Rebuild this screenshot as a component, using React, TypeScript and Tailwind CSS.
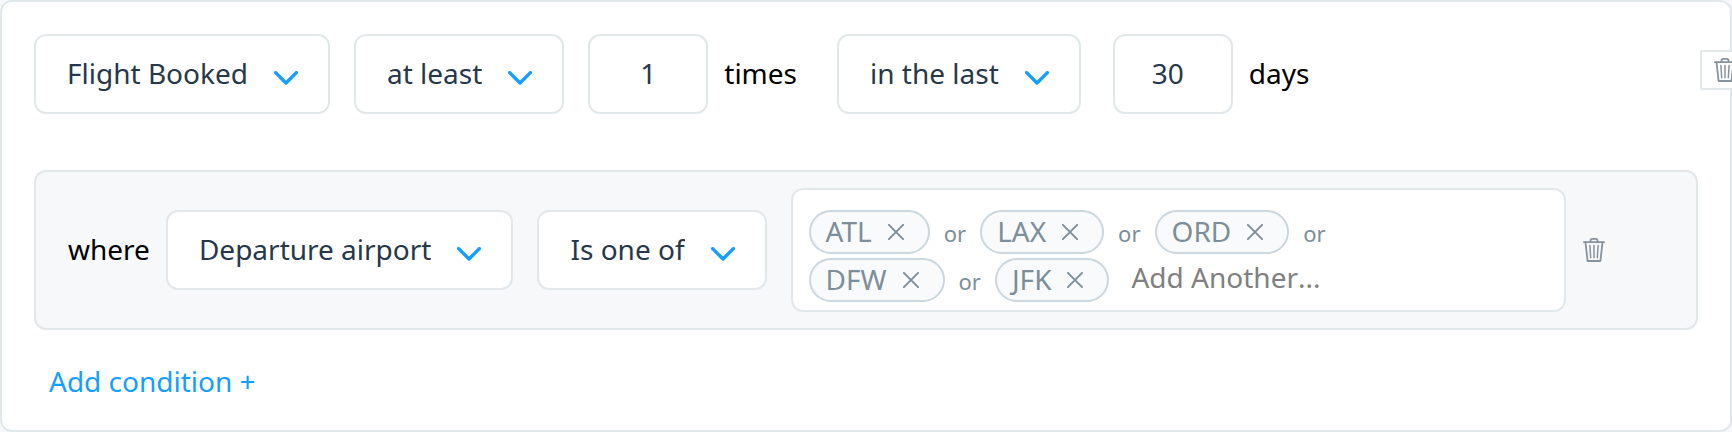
import { useState } from 'react';

interface DropdownProps {
  label: string;
  options: string[];
}

const Dropdown = ({ label, options }: DropdownProps) => (
  <div className="grid shrink-0 items-center">
    <select
      aria-label={label}
      className="col-start-1 row-start-1 h-20 field-sizing-content appearance-none rounded-xl border-2 border-[#e2e8ea] bg-white pb-0.5 pl-[31px] pr-20 text-[#26384a] outline-none"
    >
      {options.map((option) => (
        <option key={option}>{option}</option>
      ))}
    </select>
    <svg
      viewBox="0 0 24 14"
      className="pointer-events-none col-start-1 row-start-1 mt-2 mr-8 h-[14px] w-6 justify-self-end"
      fill="none"
      stroke="#149eff"
      strokeWidth="3.4"
      strokeLinecap="round"
      strokeLinejoin="round"
    >
      <path d="M1.6 1.6 12 12 22.4 1.6" />
    </svg>
  </div>
);

const TrashIcon = () => (
  <svg
    viewBox="0 0 22 24"
    className="h-6 w-[22px] shrink-0"
    fill="none"
    stroke="#87929c"
    strokeWidth="1.8"
    strokeLinecap="round"
    strokeLinejoin="round"
  >
    <path d="M.9 4.2h20.2M7.5 4V2.6C7.5 1.5 8.2.9 9.2.9h3.6c1 0 1.7.6 1.7 1.7V4" />
    <path d="M2.5 4.4 4.6 23h12.8l2.1-18.6" />
    <path d="M6.9 7.5l.8 12.3M11 7.5v12.3M15.1 7.5l-.8 12.3" strokeWidth="1.5" />
  </svg>
);

interface ChipProps {
  code: string;
  onRemove: () => void;
}

const Chip = ({ code, onRemove }: ChipProps) => (
  <span className="flex h-11 items-center gap-4 rounded-full border-2 border-[#cbd6dd] bg-[#f8fafc] pl-[15px] pr-6">
    <span className="pb-0.5">{code}</span>
    <button type="button" aria-label={`Remove ${code}`} onClick={onRemove}>
      <svg
        viewBox="0 0 16 16"
        className="size-4"
        fill="none"
        stroke="#7c8e99"
        strokeWidth="1.9"
        strokeLinecap="round"
      >
        <path d="M.9.9l14.2 14.2M15.1.9.9 15.1" />
      </svg>
    </button>
  </span>
);

const numberInput =
  'h-20 w-[120px] shrink-0 rounded-xl border-2 border-[#e2e8ea] bg-white pb-0.5 text-center text-[#26384a] outline-none';

const App = () => {
  const [airports, setAirports] = useState(['ATL', 'LAX', 'ORD', 'DFW', 'JFK']);

  const removeAirport = (code: string) =>
    setAirports(airports.filter((airport) => airport !== code));

  return (
    <main className="overflow-hidden bg-[#f6f8fa] font-['Noto_Sans',sans-serif] text-[28px] leading-10 text-black">
      <section className="relative rounded-xl border-2 border-[#e2e8ea] bg-white px-8 pt-8 pb-7">
        <div className="flex items-center">
          <div className="flex items-center gap-6">
            <Dropdown label="Event" options={['Flight Booked']} />
            <Dropdown label="Comparison" options={['at least']} />
            <label className="flex items-center gap-4">
              <input type="text" inputMode="numeric" defaultValue="1" className={numberInput} />
              <span className="pb-0.5">times</span>
            </label>
          </div>
          <div className="ml-10 flex items-center gap-8">
            <Dropdown label="Time range" options={['in the last']} />
            <label className="flex items-center gap-4">
              <input
                type="text"
                inputMode="numeric"
                defaultValue="30"
                className={`${numberInput} pr-[10px]`}
              />
              <span className="pb-0.5">days</span>
            </label>
          </div>
        </div>

        <button
          type="button"
          aria-label="Delete event"
          className="absolute top-12 -right-5 flex h-10 w-[50px] items-center justify-center rounded-xs border-2 border-[#e2e8ea] bg-white"
        >
          <TrashIcon />
        </button>

        <div className="mt-14 flex items-center rounded-xl border-2 border-[#e2e8ea] bg-[#f6f8fa] py-4 pl-8 pr-[91px]">
          <span className="mr-4 pb-0.5">where</span>
          <div className="flex grow items-center gap-6">
            <Dropdown label="Property" options={['Departure airport']} />
            <Dropdown label="Operator" options={['Is one of']} />
            <div className="flex grow basis-0 flex-wrap items-start gap-x-[14px] gap-y-1 rounded-xl border-2 border-[#e2e8ea] bg-white pt-5 pr-20 pb-2 pl-4 text-[#7c8e99]">
              {airports.map((code, index) => (
                <div key={code} className="flex items-center gap-[14px]">
                  <Chip code={code} onRemove={() => removeAirport(code)} />
                  {index < airports.length - 1 && <span className="pt-0.5 text-[22px]">or</span>}
                </div>
              ))}
              <input
                type="text"
                aria-label="Add another airport"
                placeholder="Add Another..."
                className="h-10 w-[300px] pb-0.5 pl-2 outline-none [font-kerning:none] placeholder:text-[#808080]"
              />
            </div>
          </div>
          <button type="button" aria-label="Delete condition" className="ml-[17px]">
            <TrashIcon />
          </button>
        </div>

        <button type="button" className="mt-8 ml-[15px] block pb-0.5 leading-[38px] text-[#149eff]">
          Add condition +
        </button>
      </section>
    </main>
  );
};

export default App;
